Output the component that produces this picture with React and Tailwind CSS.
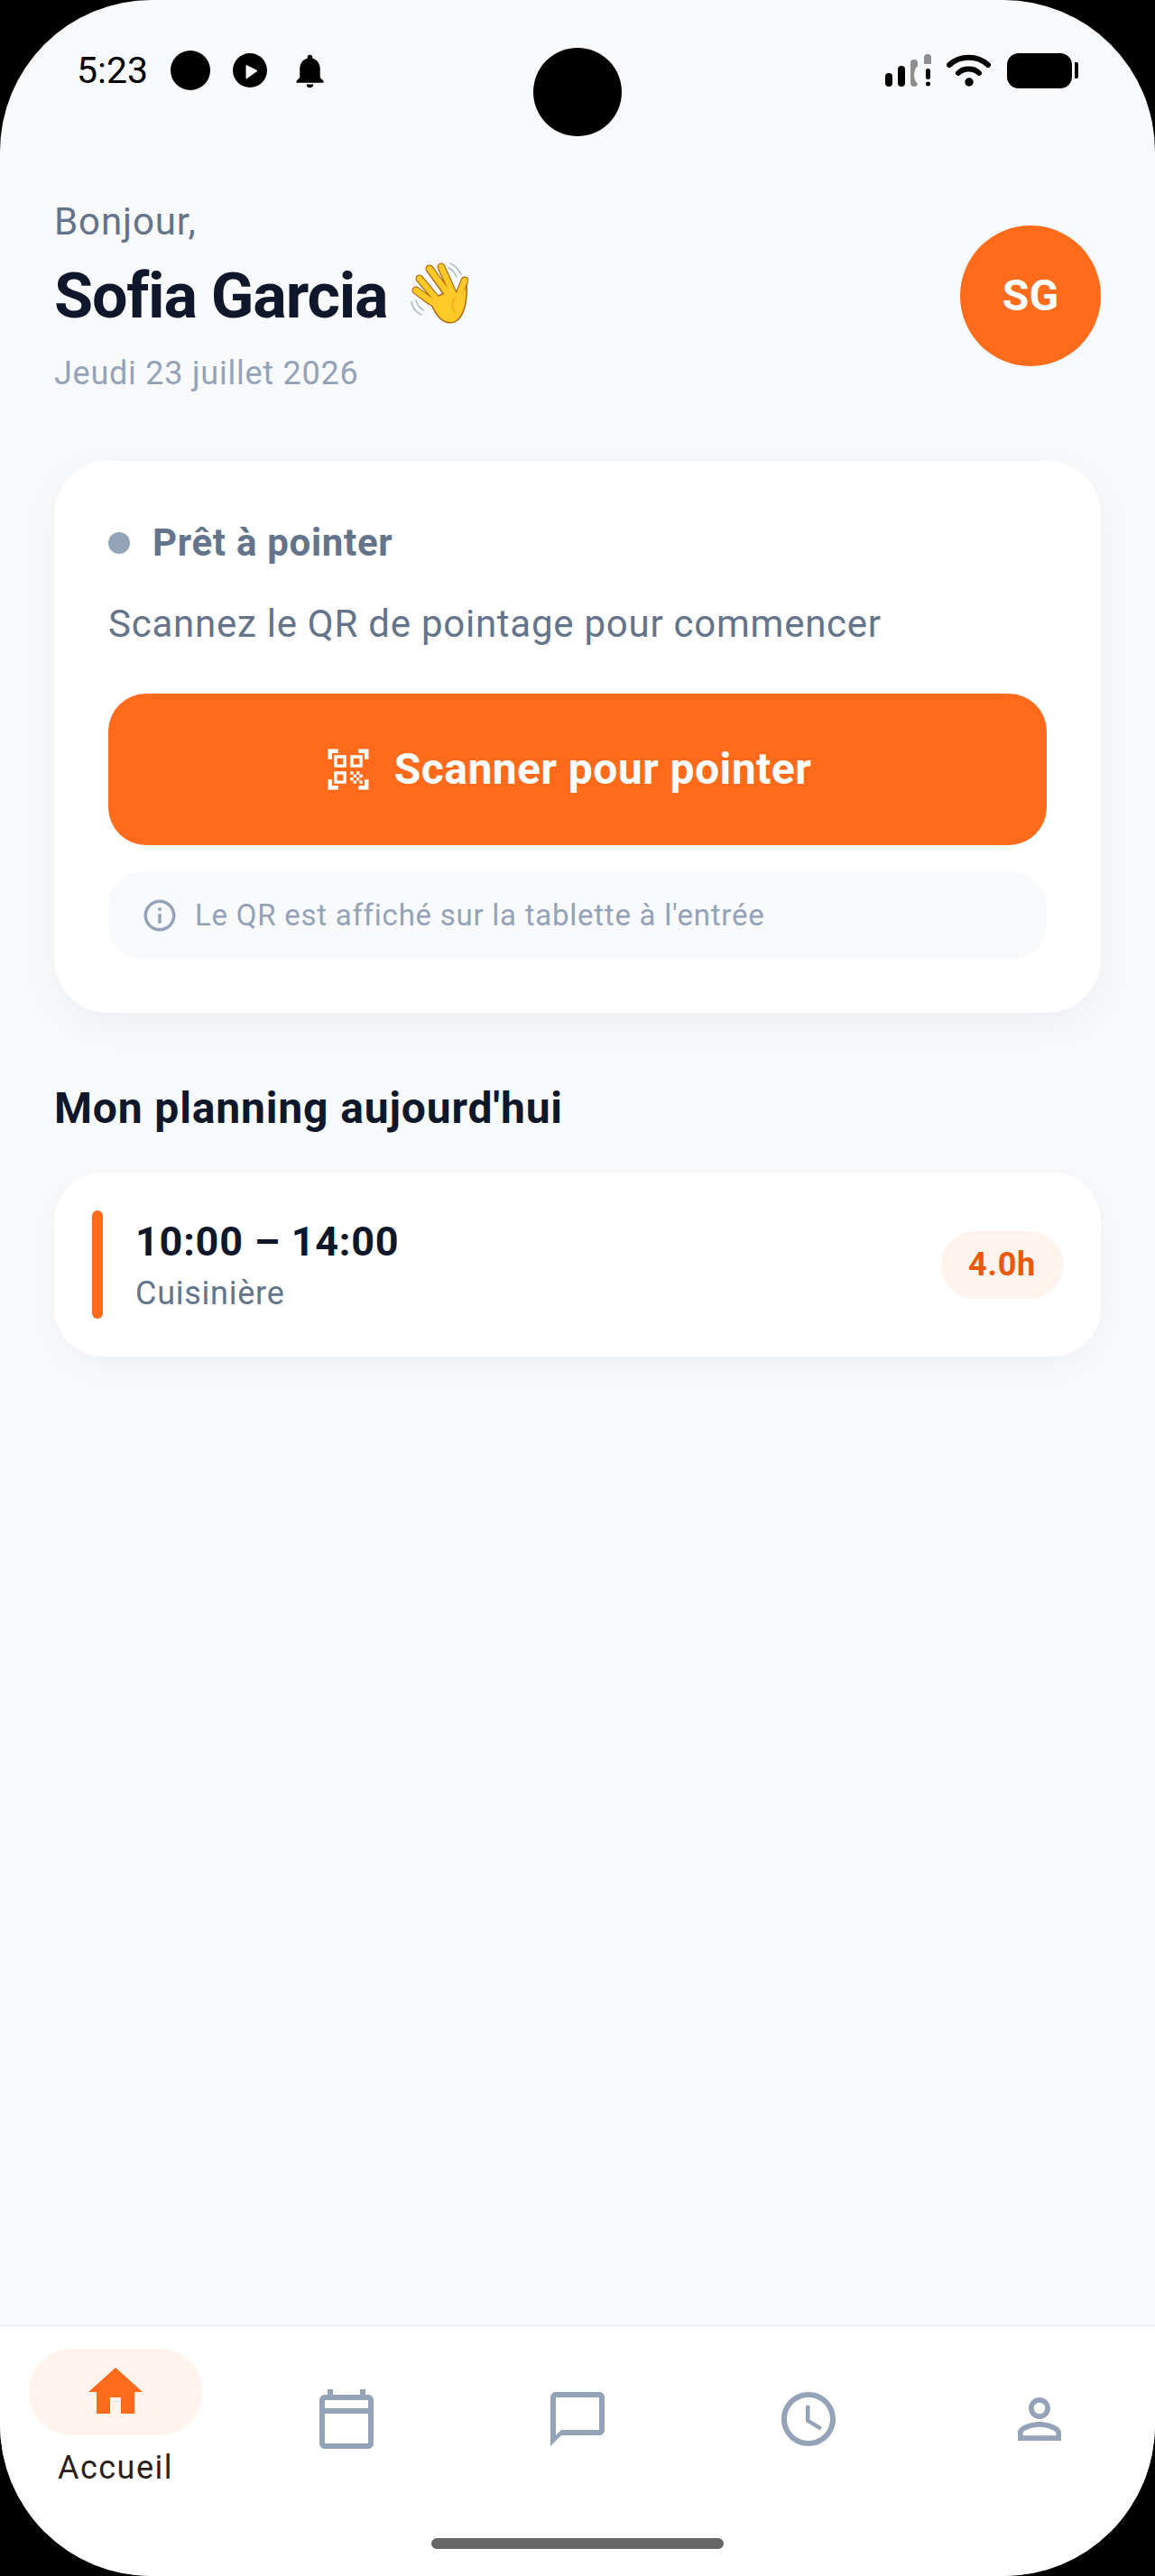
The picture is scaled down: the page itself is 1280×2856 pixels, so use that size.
import {
  MdAccessTime,
  MdChatBubbleOutline,
  MdHome,
  MdInfoOutline,
  MdNotifications,
  MdPersonOutline,
  MdQrCodeScanner,
} from "react-icons/md";

const WavingHand = () => (
  <svg width="64" height="68" viewBox="0 0 64 68" className="ml-[26px] mt-[-6px] shrink-0" fill="none" strokeLinecap="round">
    <path d="M44 1C49 3 53 8 56 13M42 6C46 8 49 11 51 16" stroke="#b0bec5" strokeWidth="1.6" />
    <path d="M1 44C2 50 6 55 12 58M6 42C7 47 10 50 14 53" stroke="#b0bec5" strokeWidth="1.6" />
    <g stroke="#b26a12" strokeWidth="9">
      <path d="M6 31L22 43M10 18L29 41M21 7L39 32M34 5L48 36M60 20L52 40" />
    </g>
    <path d="M20 42L46 30L53 40C60 30 62 24 62 24C63 38 61 56 52 64C44 70 34 66 28 56Z" fill="#ffca28" stroke="#b26a12" strokeWidth="1.5" strokeLinejoin="round" />
    <g stroke="#ffca28" strokeWidth="6.5">
      <path d="M6 31L24 44M10 18L31 43M21 7L41 34M34 5L49 38M60 20L52 40" />
    </g>
    <path d="M50 38C45 43 45 50 49 56" stroke="#f9a825" strokeWidth="1.5" />
  </svg>
);

const SignalIcon = () => (
  <svg width="51" height="36" viewBox="0 0 51 36">
    <rect x="0" y="21" width="8" height="15" rx="4" fill="#000" />
    <rect x="14" y="13" width="8" height="23" rx="4" fill="#000" />
    <rect x="28" y="6" width="8" height="30" rx="4" fill="#8e8e8e" />
    <circle cx="47" cy="23" r="15" fill="#f8fafc" />
    <path d="M43 11V4a4 4 0 0 1 8 0v7z" fill="#8e8e8e" />
    <rect x="45" y="16" width="5" height="12" rx="2.5" fill="#000" />
    <circle cx="47.5" cy="33" r="2.5" fill="#000" />
  </svg>
);

const WifiIcon = () => (
  <svg width="49" height="36" viewBox="0 0 49 36" fill="none">
    <path d="M3 12C15 1 34 1 46 12" stroke="#000" strokeWidth="6" strokeLinecap="round" />
    <path d="M13 21C19 15 30 15 36 21" stroke="#000" strokeWidth="6" strokeLinecap="round" />
    <circle cx="25" cy="31" r="4.7" fill="#000" />
  </svg>
);

const CalendarIcon = ({ size, color }) => (
  <svg width={size} height={size} viewBox="0 0 24 24" fill={color}>
    <path d="M20 3h-1V1h-2v2H7V1H5v2H4c-1.1 0-2 .9-2 2v16c0 1.1.9 2 2 2h16c1.1 0 2-.9 2-2V5c0-1.1-.9-2-2-2zm0 2v3H4V5h16zM4 21V10h16v11H4z" />
  </svg>
);

const StatusBar = () => (
  <div className="flex h-[156px] items-center justify-between pl-[85px] pr-[85px]">
    <div className="flex items-center">
      <span className="w-[104px] text-[41px] leading-[48px] text-black">5:23</span>
      <div className="h-[44px] w-[44px] rounded-full bg-black" />
      <svg width="38" height="38" viewBox="0 0 38 38" className="ml-[25px]">
        <circle cx="19" cy="19" r="19" fill="#000" />
        <path d="M15 13.5L27 19.5L15 28Z" fill="#f8fafc" stroke="#f8fafc" strokeWidth="1" strokeLinejoin="round" />
      </svg>
      <MdNotifications size={45} color="#000" className="ml-[25px]" />
    </div>
    <div className="flex items-center">
      <SignalIcon />
      <div className="ml-[17px]">
        <WifiIcon />
      </div>
      <div className="ml-[18px] h-[39px] w-[72px] rounded-[13px] bg-black" />
      <div className="ml-[3px] h-[18px] w-[4px] rounded-r-[2px] bg-black" />
    </div>
  </div>
);

const Header = () => (
  <div className="mb-[70px] mt-[60px] flex items-center justify-between">
    <div>
      <p className="text-[42px] leading-[60px] tracking-[0.9px] text-[#64748b]">Bonjour,</p>
      <div className="mt-[7px] flex items-center">
        <h1 className="text-[70px] font-bold leading-[90px] tracking-[-1.2px] text-[#0f172a]">Sofia Garcia</h1>
        <WavingHand />
      </div>
      <p className="mt-[14px] text-[36px] leading-[54px] tracking-[0.75px] text-[#94a3b8]">Jeudi 23 juillet 2026</p>
    </div>
    <div className="mb-[2px] flex h-[156px] w-[156px] items-center justify-center rounded-full bg-[#ff6b1a] text-[48px] font-bold text-white">
      SG
    </div>
  </div>
);

const PointerCard = () => (
  <div className="rounded-[60px] bg-white p-[60px] shadow-[0_12px_48px_rgba(15,23,42,0.05)]">
    <div className="flex h-[62px] items-center">
      <span className="h-[24px] w-[24px] rounded-full bg-[#94a3b8]" />
      <span className="ml-[25px] text-[42px] font-bold leading-[62px] tracking-[0.7px] text-[#64748b]">Prêt à pointer</span>
    </div>
    <p className="mt-[29px] text-[42px] leading-[60px] tracking-[0.75px] text-[#64748b]">
      Scannez le QR de pointage pour commencer
    </p>
    <button className="mt-[47px] flex h-[168px] w-full items-center justify-center rounded-[42px] bg-[#ff6b1a] pr-[22px] text-[48px] font-bold tracking-[0.45px] text-white">
      <MdQrCodeScanner size={54} />
      <span className="ml-[24px]">Scanner pour pointer</span>
    </button>
    <div className="mt-[30px] flex h-[96px] items-center rounded-[36px] bg-[#f8fafc] pl-[36px] text-[#94a3b8]">
      <MdInfoOutline size={42} />
      <span className="ml-[18px] text-[33px] tracking-[0.75px]">Le QR est affiché sur la tablette à l'entrée</span>
    </div>
  </div>
);

const ShiftCard = () => (
  <div className="flex h-[204px] items-center rounded-[54px] bg-white px-[42px] shadow-[0_12px_36px_rgba(15,23,42,0.04)]">
    <div className="h-[120px] w-[12px] rounded-full bg-[#ff6b1a]" />
    <div className="ml-[36px] flex-1">
      <p className="text-[45px] font-bold leading-[60px] tracking-[0.75px] text-[#0f172a]">10:00 – 14:00</p>
      <p className="mt-[3px] text-[36px] leading-[48px] tracking-[0.75px] text-[#64748b]">Cuisinière</p>
    </div>
    <div className="flex h-[75px] w-[135px] items-center justify-center rounded-full bg-[#fff3eb] text-[36px] font-bold tracking-[0.75px] text-[#ea580c]">
      4.0h
    </div>
  </div>
);

const navItems = [
  { icon: CalendarIcon },
  { icon: MdChatBubbleOutline },
  { icon: MdAccessTime },
  { icon: MdPersonOutline },
];

const BottomNav = () => (
  <div className="border-t-[3px] border-[#f1f5f9] bg-white pt-[24px] pb-[30px]">
    <div className="grid grid-cols-5">
      <div className="flex h-[156px] flex-col items-center justify-center">
        <div className="flex h-[96px] w-[192px] items-center justify-center rounded-full bg-[#fff3eb]">
          <MdHome size={72} color="#ff6b1a" />
        </div>
        <span className="mt-[12px] text-[36px] leading-[48px] tracking-[1.5px] text-[#2a1f1a]">Accueil</span>
      </div>
      {navItems.map((item, index) => (
        <div key={index} className="flex h-[156px] items-center justify-center">
          <item.icon size={72} color="#94a3b8" />
        </div>
      ))}
    </div>
    <div className="mx-auto mt-[54px] h-[12px] w-[324px] rounded-full bg-[#666666]" />
  </div>
);

export default function App() {
  return (
    <div className="h-[2856px] w-[1280px] bg-black font-['Roboto',sans-serif]">
      <div className="relative flex h-full flex-col overflow-hidden rounded-[168px] bg-[#f8fafc]">
        <div className="absolute left-[591px] top-[53px] h-[98px] w-[98px] rounded-full bg-black" />
        <StatusBar />
        <div className="flex-1 px-[60px]">
          <Header />
          <PointerCard />
          <h2 className="mb-[38px] mt-[73px] text-[48px] font-bold leading-[66px] tracking-[0.85px] text-[#0f172a]">Mon planning aujourd'hui</h2>
          <ShiftCard />
        </div>
        <BottomNav />
      </div>
    </div>
  );
}
